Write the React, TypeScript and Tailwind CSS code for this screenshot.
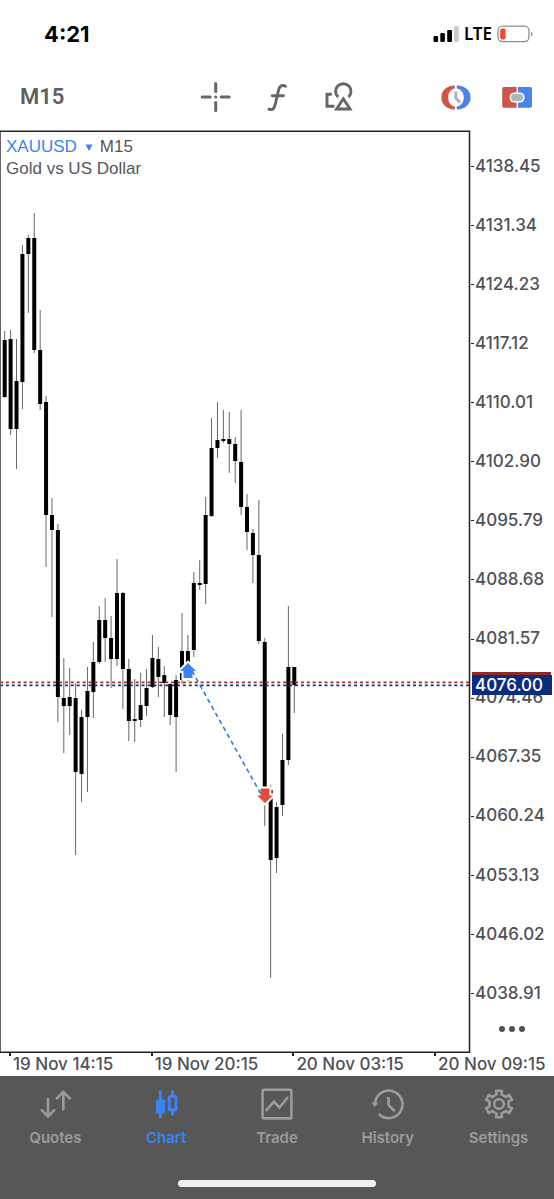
import React, { useState } from "react";

// [high, body top, body bottom, low]
const candles = [
  [331, 340, 397, 398],
  [330, 339, 429, 435],
  [339, 381, 429, 469],
  [245, 254, 382, 409],
  [235, 238, 254, 313],
  [213, 238, 350, 353],
  [310, 350, 404, 410],
  [396, 402, 515, 567],
  [498, 515, 530, 617],
  [524, 530, 697, 722],
  [658, 698, 706, 753],
  [668, 697, 706, 735],
  [683, 698, 772, 855],
  [710, 717, 774, 802],
  [667, 691, 717, 792],
  [642, 662, 692, 718],
  [606, 620, 662, 664],
  [598, 620, 638, 662],
  [616, 638, 659, 688],
  [559, 593, 659, 666],
  [592, 593, 669, 709],
  [659, 669, 721, 741],
  [679, 719, 721, 742],
  [673, 705, 720, 727],
  [669, 688, 706, 716],
  [635, 658, 687, 688],
  [647, 659, 677, 697],
  [666, 675, 683, 717],
  [683, 684, 715, 725],
  [675, 680, 717, 772],
  [613, 651, 680, 684],
  [635, 651, 664, 681],
  [572, 583, 650, 657],
  [560, 583, 585, 590],
  [497, 515, 584, 604],
  [418, 448, 516, 517],
  [402, 440, 448, 458],
  [410, 439, 441, 443],
  [412, 439, 444, 473],
  [437, 444, 461, 483],
  [410, 462, 507, 515],
  [494, 507, 532, 550],
  [529, 533, 555, 583],
  [500, 555, 641, 644],
  [638, 642, 790, 826],
  [785, 790, 860, 978],
  [802, 807, 858, 873],
  [734, 760, 805, 816],
  [606, 667, 760, 765],
  [667, 667, 685, 713],
];

const prices = [
  "4138.45",
  "4131.34",
  "4124.23",
  "4117.12",
  "4110.01",
  "4102.90",
  "4095.79",
  "4088.68",
  "4081.57",
  "4074.46",
  "4067.35",
  "4060.24",
  "4053.13",
  "4046.02",
  "4038.91",
];

const times = ["19 Nov 14:15", "19 Nov 20:15", "20 Nov 03:15", "20 Nov 09:15"];

const gearPoints = Array.from({ length: 6 }, (_, i) => i * 60 - 90)
  .flatMap((a) => [
    [a - 23, 9.6],
    [a - 14, 10],
    [a - 12, 13.6],
    [a + 12, 13.6],
    [a + 14, 10],
    [a + 23, 9.6],
  ])
  .map(([deg, r]) => {
    const rad = (deg * Math.PI) / 180;
    return `${(16 + r * Math.cos(rad)).toFixed(2)},${(16 + r * Math.sin(rad)).toFixed(2)}`;
  })
  .join(" ");

const StatusBar = () => (
  <div className="flex h-[68px] items-center justify-between pr-[21px] pl-[44px] text-black">
    <span className="text-[22px] font-bold">4:21</span>
    <div className="flex items-center gap-[5px]">
      <svg width="26" height="16" viewBox="0 0 26 16" aria-hidden="true">
        <rect x="0.5" y="10" width="4.6" height="6" rx="1.2" />
        <rect x="7.3" y="7" width="4.6" height="9" rx="1.2" />
        <rect x="14.2" y="4" width="4.8" height="12" rx="1.2" />
        <rect x="21" y="0.2" width="4.8" height="15.8" rx="1.2" fill="#cacaca" />
      </svg>
      <span className="font-['Noto_Sans',sans-serif] text-[17px] leading-5 font-semibold">
        LTE
      </span>
      <svg width="36" height="18" viewBox="0 0 36 18" aria-hidden="true">
        <rect x="1" y="1.2" width="31" height="15.4" rx="4.5" fill="none" stroke="#8e8e8e" strokeWidth="1.3" />
        <rect x="3.2" y="3.4" width="5.4" height="11" rx="2" fill="#f0453a" />
        <path d="M34 6.4 C36 7.4 36 10.4 34 11.4 Z" fill="#8e8e8e" />
      </svg>
    </div>
  </div>
);

const Toolbar = () => (
  <header className="grid h-[62px] grid-cols-[1fr_auto_1fr] items-center pr-[21px] pb-1 pl-5 text-[#666]">
    <button
      type="button"
      className="justify-self-start font-['Roboto',sans-serif] text-[22px] leading-8 font-semibold text-[#5e5e5e]"
    >
      M15
    </button>
    <div className="flex gap-[30px]">
      <button type="button" aria-label="Crosshair">
        <svg width="32" height="32" viewBox="0 0 32 32" stroke="currentColor" strokeWidth="3" strokeLinecap="round">
          <path d="M16.7 2.5V10.5M16.7 21.5V29.5M3.2 16H11.2M22.2 16H30.2" />
          <circle cx="16.7" cy="16" r="1.6" fill="currentColor" stroke="none" />
        </svg>
      </button>
      <button type="button" aria-label="Indicators">
        <svg width="32" height="32" viewBox="0 0 32 32" fill="none" stroke="currentColor" strokeWidth="2.9" strokeLinecap="round">
          <path d="M24.6 5.2C20.6 3.2 18.4 5.2 17.4 9.6L14.4 22.8C13.4 27.6 11.4 29.6 8 28.2" />
          <path d="M11.2 14.8H22.4" />
        </svg>
      </button>
      <button type="button" aria-label="Objects">
        <svg width="32" height="32" viewBox="0 0 32 32" fill="none" stroke="currentColor" strokeWidth="2.9">
          <path d="M15.2 16.2A7.7 7.7 0 1 1 25.4 16.2" />
          <path d="M8.8 13.2H4V25.3H11.4" />
          <path d="M20.3 17.8L27 28H13.6Z" />
        </svg>
      </button>
    </div>
    <div className="flex gap-[30px] justify-self-end">
      <button type="button" aria-label="Pending order">
        <svg width="32" height="32" viewBox="0 0 32 32">
          <path d="M15.8 4.6C8 4.4 2.4 9.4 2.4 16.4S8 28.6 15.8 28.4V25.6C11.6 25 9.2 21.2 9.2 16.5S11.6 8 15.8 7.4Z" fill="#ca5748" />
          <path d="M17.8 4.6C25.6 4.4 31.6 9.4 31.6 16.4S25.6 28.6 17.8 28.4V25.6C22 25 24.8 21.2 24.8 16.5S22 8 17.8 7.4Z" fill="#4a83ea" />
          <path d="M16.8 10.5V16.8L20.8 21.6" fill="none" stroke="#a9b5bf" strokeWidth="3" />
        </svg>
      </button>
      <button type="button" aria-label="One click trading">
        <svg width="32" height="32" viewBox="0 0 32 32">
          <path d="M15.6 6V26.8H3Q1.2 26.8 1.2 25V7.8Q1.2 6 3 6Z" fill="#ca5748" />
          <path d="M17 6V26.8H29.2Q31 26.8 31 25V7.8Q31 6 29.2 6Z" fill="#4a83ea" />
          <rect x="8.6" y="11.4" width="15" height="10.2" rx="4.6" fill="#fff" />
          <rect x="10" y="13" width="12.2" height="7" rx="3.2" fill="#a9b5bf" />
        </svg>
      </button>
    </div>
  </header>
);

const Plot = () => (
  <div className="relative">
    <svg viewBox="0 130 471 923" className="block w-full" role="img" aria-label="XAUUSD candlestick chart">
      {candles.map(([high, top, bottom, low], i) => {
        const x = 4.7 + i * 5.91;
        return (
          <g key={i}>
            <line x1={x} x2={x} y1={high} y2={low} stroke="#666" strokeWidth="1" />
            <rect x={x - 2} y={top} width="4" height={bottom - top} fill="#000" />
          </g>
        );
      })}
      <line x1="0" x2="469" y1="682.4" y2="682.4" stroke="#a5322b" strokeWidth="1.7" strokeDasharray="3 2.9" />
      <line x1="0" x2="469" y1="685.4" y2="685.4" stroke="#15308a" strokeWidth="1.7" strokeDasharray="3 2.9" />
      <path d="M188 663L196 671H192.5V678H183.5V671H180Z" fill="#3a82f7" stroke="#fff" strokeWidth="4" paintOrder="stroke" />
      <path d="M265 803L257 795.5H260.5V788.5H269.5V795.5H273Z" fill="#e24c3c" stroke="#fff" strokeWidth="4" paintOrder="stroke" />
      <line x1="192" y1="671" x2="262" y2="796" stroke="#2f78ee" strokeWidth="1.6" strokeDasharray="4.5 3.5" />
      <line x1="0.5" x2="0.5" y1="131" y2="1052" stroke="#666" />
      <path d="M0 131.3H469.5V1052.3H0" fill="none" stroke="#222" strokeWidth="1.5" />
    </svg>
    <div className="absolute top-[6px] left-[6px] font-['Liberation_Sans',Arial,sans-serif] text-[17px] leading-[22px] text-[#55565c]">
      <div className="flex items-center gap-[7px]">
        <button type="button" className="flex items-center gap-2 text-[#3a82f7]">
          XAUUSD
          <svg width="8" height="7" viewBox="0 0 8 7" aria-hidden="true">
            <path d="M0.5 0.5H7.5L4 7Z" fill="currentColor" />
          </svg>
        </button>
        <span>M15</span>
      </div>
      <p>Gold vs US Dollar</p>
    </div>
  </div>
);

const PriceAxis = () => (
  <div className="relative flex flex-col pt-[7px] text-[17px] font-medium text-[#505158]">
    {prices.map((price) => (
      <div key={price} className="flex flex-1 items-center gap-px">
        <span className="h-px w-[3px] bg-[#222]" />
        {price}
      </div>
    ))}
    <button type="button" aria-label="More" className="mb-[18px] ml-7 flex h-3 items-center gap-1">
      <span className="size-[6px] rounded-full bg-[#505158]" />
      <span className="size-[6px] rounded-full bg-[#505158]" />
      <span className="size-[6px] rounded-full bg-[#505158]" />
    </button>
    <div className="absolute top-[542px] right-[2px] left-px">
      <div className="mr-px h-[3px] bg-[#8f2b27]" />
      <div className="h-5 bg-[#0d2c7c] pl-[3px] leading-5 text-white">4076.00</div>
    </div>
  </div>
);

const TimeAxis = () => (
  <div className="flex h-[23px] overflow-hidden pl-[9px] text-[17px] font-medium text-[#505158]">
    {times.map((time) => (
      <div key={time} className="flex shrink-0 basis-[26%] gap-[2px]">
        <span className="h-[3px] w-[2px] bg-[#222]" />
        <span className="leading-[23px] whitespace-nowrap">{time}</span>
      </div>
    ))}
  </div>
);

const tabs = [
  {
    name: "Quotes",
    icon: (
      <g strokeLinecap="round" strokeLinejoin="round">
        <path d="M9 11V28.5M2.8 22.2L9 28.5L15.2 22.2" />
        <path d="M24.3 21.5V3.8M17.8 10.3L24.3 3.8L30.8 10.3" />
      </g>
    ),
  },
  {
    name: "Chart",
    icon: (
      <>
        <path d="M10.3 2.5V30" strokeWidth="3" />
        <rect x="6" y="11.5" width="9" height="14" rx="1" fill="currentColor" stroke="none" />
        <path d="M22.5 2.5V8M22.5 22V27.5" strokeWidth="3" />
        <rect x="19.2" y="8.4" width="6.8" height="13.4" rx="0.5" strokeWidth="3" />
      </>
    ),
  },
  {
    name: "Trade",
    icon: (
      <>
        <rect x="1.6" y="1.8" width="28.8" height="28.6" rx="1.5" />
        <path d="M4.8 22.8L13 13.6L18.4 19.6L27 9" />
      </>
    ),
  },
  {
    name: "History",
    icon: (
      <>
        <path d="M2.9 17A13.8 13.8 0 1 1 6.8 26" />
        <path d="M-0.6 14.6H6.4L2.7 19Z" fill="currentColor" stroke="none" />
        <path d="M16.5 9V17L22.8 23.2" />
      </>
    ),
  },
  {
    name: "Settings",
    icon: (
      <>
        <polygon points={gearPoints} strokeLinejoin="round" />
        <circle cx="16" cy="16" r="4.8" />
      </>
    ),
  },
];

const TabBar = () => {
  const [active, setActive] = useState("Chart");

  return (
    <nav className="flex grow flex-col justify-between bg-[#575757] pt-3 pb-3">
      <div className="grid grid-cols-5">
        {tabs.map(({ name, icon }) => (
          <button
            key={name}
            type="button"
            onClick={() => setActive(name)}
            className={`flex flex-col items-center gap-2 text-[15px] leading-5 font-semibold ${
              active === name ? "text-[#3a82f7]" : "text-[#9b9b9b]"
            }`}
          >
            <svg
              width="32"
              height="32"
              viewBox="0 0 32 32"
              fill="none"
              stroke="currentColor"
              strokeWidth="2.6"
              className="overflow-visible"
              aria-hidden="true"
            >
              {icon}
            </svg>
            {name}
          </button>
        ))}
      </div>
      <div className="mt-8 h-[7px] w-[198px] self-center rounded-full bg-[#f1f1f1]" />
    </nav>
  );
};

const App = () => {
  return (
    <div className="flex min-h-screen flex-col bg-white font-['Inter',sans-serif]">
      <StatusBar />
      <Toolbar />
      <main>
        <div className="grid grid-cols-[minmax(0,1fr)_83px]">
          <Plot />
          <PriceAxis />
        </div>
        <TimeAxis />
      </main>
      <TabBar />
    </div>
  );
};

export default App;
